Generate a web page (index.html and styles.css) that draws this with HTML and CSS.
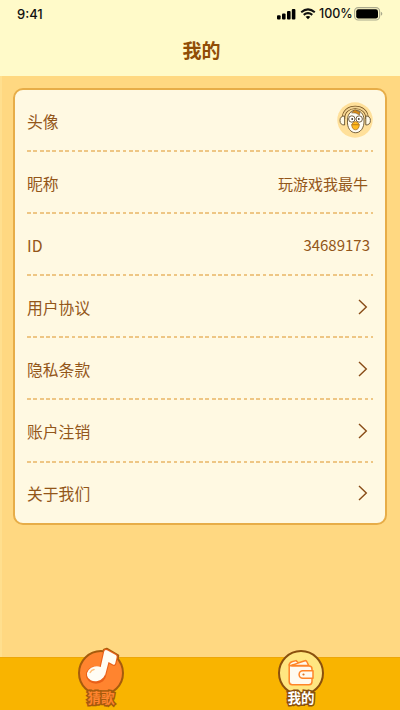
FILE: index.html
```html
<!DOCTYPE html>
<html lang="zh-CN">
<head>
<meta charset="utf-8">
<title>我的</title>
<link rel="stylesheet" href="styles.css">
</head>
<body>
<div class="screen">
  <header class="header">
    <div class="status">
      <span class="time">9:41</span>
      <div class="indicators">
        <svg class="signal" width="19" height="12" viewBox="0 0 19 12"><rect x="0" y="7.3" width="3.6" height="4.2" rx="1"/><rect x="5" y="5.4" width="3.6" height="6.1" rx="1"/><rect x="10" y="3.1" width="3.6" height="8.4" rx="1"/><rect x="14.8" y="1" width="3.6" height="10.5" rx="1"/></svg>
        <svg class="wifi" width="16" height="12" viewBox="0 0 16 12"><path d="M1.2 4.2Q8-1.5 14.8 4.2M3.7 6.9Q8 3.4 12.3 6.9" fill="none" stroke="#111" stroke-width="2"/><path d="M5.6 8.8Q8 7 10.4 8.8L8 11.3Z"/></svg>
        <span class="percent">100%</span>
        <svg class="battery" width="29" height="14" viewBox="0 0 29 14"><rect x=".6" y=".6" width="25" height="12.4" rx="3.6" fill="none" stroke="#aaa98d" stroke-width="1.1"/><rect x="2.2" y="2.2" width="21.8" height="9.2" rx="2.2"/><path d="M26.8 4.8Q28.3 5.3 28.3 6.8T26.8 8.8Z" fill="#aaa98d"/></svg>
      </div>
    </div>
    <h1 class="title">我的</h1>
  </header>
  <main class="content">
    <ul class="card">
      <li class="row"><span>头像</span>
        <svg class="avatar" width="36" height="36" viewBox="0 0 36 36">
          <circle cx="18" cy="18" r="17.7" fill="#ffe09a"/>
          <g stroke="#65502e" stroke-width=".9">
            <path d="M10.5 18C10.5 5 27 5 27 18C28 35 9 35 10.5 18Z" fill="#fffdf4"/>
            <path d="M14.5 11Q18 6 20 9L23 10L22.5 13Q18 10 14.5 11Z" fill="#d68917" stroke-width=".5"/>
          </g>
          <path d="M6.5 17C5.5 1.5 31 1.5 30 17" fill="none" stroke="#72501f" stroke-width="3.4"/>
          <path d="M6.5 17C5.5 1.5 31 1.5 30 17" fill="none" stroke="#f3d594" stroke-width="1.8"/>
          <g stroke="#65502e" stroke-width=".9">
            <path d="M7.6 14Q3 14 3 18.5T7.6 23Z" fill="#fffbe8"/>
            <path d="M28.8 14Q33.4 14 33.4 18.5T28.8 23Z" fill="#fffbe8"/>
            <circle cx="14.8" cy="17" r="3.2" fill="#fff"/>
            <circle cx="22.2" cy="17" r="3.2" fill="#fff"/>
            <path d="M14.6 22.6Q18.5 16.5 22.4 22.6Q21.8 27.8 18.5 27.8T14.6 22.6Z" fill="#ffb91e" stroke="#9d6316" stroke-width=".7"/>
            <path d="M14.8 22.7H22.2" stroke="#9d6316" stroke-width=".7"/>
          </g>
          <g fill="#403622"><circle cx="15.2" cy="17" r=".9"/><circle cx="21.8" cy="17" r=".9"/></g>
        </svg>
      </li>
      <li class="row"><span>昵称</span><span class="value name">玩游戏我最牛</span></li>
      <li class="row"><span>ID</span><span class="value">34689173</span></li>
      <li class="row"><span>用户协议</span><svg class="arrow" width="10" height="16" viewBox="0 0 10 16"><path d="M1 1L8.3 8L1 15"/></svg></li>
      <li class="row"><span>隐私条款</span><svg class="arrow" width="10" height="16" viewBox="0 0 10 16"><path d="M1 1L8.3 8L1 15"/></svg></li>
      <li class="row"><span>账户注销</span><svg class="arrow" width="10" height="16" viewBox="0 0 10 16"><path d="M1 1L8.3 8L1 15"/></svg></li>
      <li class="row"><span>关于我们</span><svg class="arrow" width="10" height="16" viewBox="0 0 10 16"><path d="M1 1L8.3 8L1 15"/></svg></li>
    </ul>
  </main>
  <nav class="tabs">
    <a class="tab">
      <svg class="tab-icon" width="50" height="50" viewBox="0 0 50 50">
        <path d="M28 2L31 1L42 7.5L40.5 17L35 16Z" fill="#a65b0c" stroke="#a65b0c" stroke-width="2.5" stroke-linejoin="round"/>
        <circle cx="25" cy="25" r="22" fill="#ff842f" stroke="#a65b0c" stroke-width="2"/>
        <g fill="#e96019" stroke="#e96019" stroke-width="2.2" stroke-linejoin="round"><path d="M24.5 20L28.2 3.5Q28.8 1.2 31 2.3L39.7 7Q41 7.8 40.6 9.5L39.3 15.3Q38.6 17.5 37 16.5L32.5 14L29 27.5Z"/><ellipse cx="20" cy="27" rx="9" ry="7.6"/></g>
        <g fill="#fffdf4"><path d="M24.5 20L28.2 3.5Q28.8 1.2 31 2.3L39.7 7Q41 7.8 40.6 9.5L39.3 15.3Q38.6 17.5 37 16.5L32.5 14L29 27.5Z"/><ellipse cx="20" cy="25.8" rx="9.1" ry="7.4" transform="rotate(-12 20 25.8)"/></g>
        <path d="M14.2 24.5Q15.5 21.8 18 21.6" fill="none" stroke="#ffc17d" stroke-width="1.5" stroke-linecap="round"/>
      </svg>
      <span class="tab-label song">猜歌</span>
    </a>
    <a class="tab">
      <svg class="tab-icon" width="50" height="50" viewBox="0 0 50 50">
        <circle cx="25" cy="25" r="22" fill="#ffe681" stroke="#8a500d" stroke-width="2"/>
        <g fill="#fffaf0" stroke="#ff8529" stroke-width="1.5" stroke-linejoin="round" stroke-linecap="round">
          <path d="M15 17.2L29 12.7Q30.2 12.3 31 14L32.7 17.5Z"/>
          <path d="M13.2 16.8Q13.5 18 16 18H33Q36 18 36 21V33.5Q36 36.7 33 36.7H16.2Q13.2 36.7 13.2 33.5Z"/>
          <path d="M13.2 17Q13.4 14.4 16 13.7L20 12.6L22 14.5"/>
          <path d="M37 22.8H26.8A3.7 3.7 0 0 0 26.8 30.2H37Z"/>
        </g><circle cx="27.5" cy="26.5" r="1.1" fill="#dd7420"/>
      </svg>
      <span class="tab-label mine">我的</span>
    </a>
  </nav>
</div>
</body>
</html>
```
FILE: styles.css
```css
* { box-sizing: border-box; }
body { margin: 0; font-family: "Noto Sans CJK SC", sans-serif; color: #935619; }
.screen { width: 400px; height: 710px; overflow: hidden; display: flex; flex-direction: column; background: linear-gradient(90deg, #ffdf8e 2px, #ffd881 2px); }
.header { height: 76px; background: #fffac9; }
.status { height: 27px; padding: 1px 17px 0 17px; display: flex; justify-content: space-between; align-items: center; color: #111; font-family: Inter, sans-serif; line-height: 26px; }
.time { font-size: 13px; font-weight: 500; }
.indicators { display: flex; align-items: center; fill: #000; }
.signal { margin-right: 4px; }
.wifi { margin-right: 2px; }
.percent { width: 36px; margin-right: 0; padding-left: 1px; font-size: 12.5px; font-weight: 500; white-space: nowrap; }
.title { margin: 9px 0 0 3px; text-align: center; font-size: 19px; line-height: 28px; font-weight: 700; color: #904d06; }
.content { height: 581px; padding: 12px 13px; }
.card { list-style: none; margin: 0; height: 437px; padding: 0 12px; border: 2px solid #e7ad48; border-radius: 10px; background: #fff9e2; }
.row { height: 62.1px; padding-top: 1px; display: flex; justify-content: space-between; align-items: center; font-size: 15.8px; line-height: 24px; background: repeating-linear-gradient(90deg, #eec684 0 3.8px, transparent 3.8px 6.37px) left bottom / 100% 2px no-repeat; }
.row:last-child { background: none; }
.value { font-size: 15px; margin: 0 3px 2px 0; }
.name { margin: 0 5px 0 0; }
.arrow { margin: 0 5px 2px 0; fill: none; stroke: #884b16; stroke-width: 1.4; }
.avatar { margin-bottom: 3px; }
.tabs { height: 53px; display: flex; border-top: 1px solid #eda708; background: #f9b400; }
.tab { width: 200px; display: flex; flex-direction: column; align-items: center; }
.tab-icon { flex: none; margin: -10px 0 0 2px; overflow: visible; }
.tab-label { position: relative; margin: -11px 0 0 2px; font-size: 13.5px; line-height: 20px; font-weight: 700; paint-order: stroke fill; }
.song { color: #ff842f; -webkit-text-stroke: 3px #a65b0c; }
.mine { color: #fff; -webkit-text-stroke: 3px #8a500d; }
```
